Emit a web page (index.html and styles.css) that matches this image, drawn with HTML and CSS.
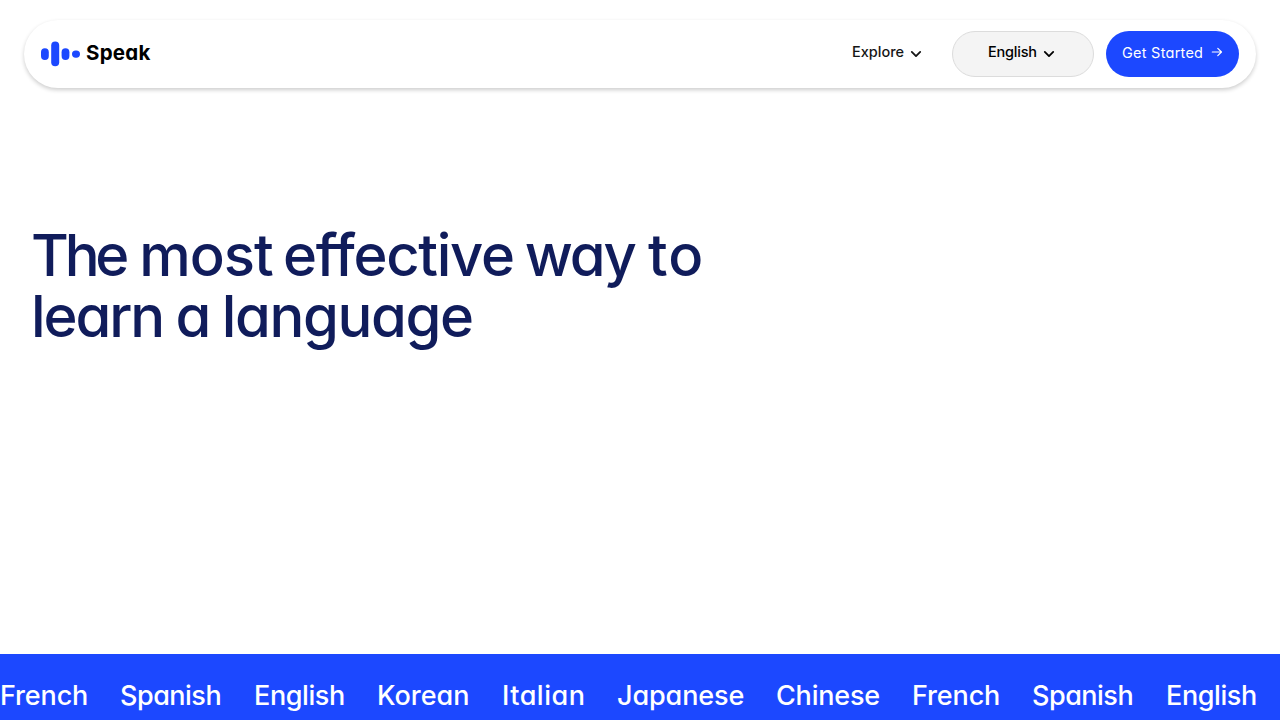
FILE: index.html
```html
<!DOCTYPE html>
<html lang="en">
<head>
<meta charset="utf-8">
<title>Speak</title>
<link rel="stylesheet" href="styles.css">
</head>
<body>
<header class="nav">
  <a class="brand">
    <svg class="brand-mark" width="40" height="26" viewBox="0 0 40 26" fill="#1c48ff">
      <rect x="1" y="7.3" width="7.8" height="11.6" rx="3.9"/>
      <rect x="11.2" y="0.4" width="8" height="24.8" rx="4"/>
      <rect x="21.6" y="7.3" width="7.8" height="11.6" rx="3.9"/>
      <rect x="32" y="9.4" width="8" height="7.4" rx="3.7"/>
    </svg>
    <span class="brand-name">Speak</span>
  </a>
  <nav class="actions">
    <a class="explore"><span class="explore-text">Explore</span>
      <svg class="chevron" width="12" height="8" viewBox="0 0 12 8" fill="none" stroke="currentColor" stroke-width="1.8" stroke-linecap="round" stroke-linejoin="round"><path d="M1.8 1.9 6 6.1l4.2-4.2"/></svg></a>
    <a class="language"><span class="language-text">English</span>
      <svg class="chevron" width="12" height="8" viewBox="0 0 12 8" fill="none" stroke="currentColor" stroke-width="1.8" stroke-linecap="round" stroke-linejoin="round"><path d="M1.8 1.9 6 6.1l4.2-4.2"/></svg></a>
    <a class="start"><span class="start-text">Get Started</span>
      <svg class="arrow" width="12" height="10" viewBox="0 0 12 10" fill="none" stroke="currentColor" stroke-width="1.2" stroke-linecap="round" stroke-linejoin="round"><path d="M1.3 5h9.2M6.8 1.3 10.5 5 6.8 8.7"/></svg></a>
  </nav>
</header>
<main class="hero">
  <h1 class="title">
    <span class="line"><span class="tight">The</span> <span class="wide">most</span> <span class="medium">effective</span> <span class="snug way">way</span> <span class="wide">to</span></span>
    <span class="line line-two"><span class="snug">learn</span> <span class="snug">a</span> <span class="language-word">language</span></span>
  </h1>
</main>
<section class="languages">
  <span class="item french">French</span>
  <span class="item spanish">Spanish</span>
  <span class="item english">English</span>
  <span class="item korean">Korean</span>
  <span class="item italian">Italian</span>
  <span class="item japanese">Japanese</span>
  <span class="item chinese">Chinese</span>
  <span class="item french">French</span>
  <span class="item spanish">Spanish</span>
  <span class="item english">English</span>
</section>
</body>
</html>
```
FILE: styles.css
```css
* { box-sizing: border-box; }
body {
  margin: 0;
  height: 720px;
  overflow: hidden;
  display: flex;
  flex-direction: column;
  background: #fff;
  font-family: Inter, "Liberation Sans", sans-serif;
  font-feature-settings: "cv11" 1;
}
.nav {
  display: flex;
  align-items: center;
  justify-content: space-between;
  height: 68px;
  margin: 20px 24px 0;
  padding: 0 17px 0 16px;
  border-radius: 34px;
  background: #fff;
  box-shadow: 0 2px 4px rgba(0, 0, 0, 0.2);
}
.brand { display: flex; align-items: center; gap: 6px; color: #000; }
.brand-name { font-size: 20.5px; line-height: 24px; font-weight: 700; margin-top: -3px; letter-spacing: 0.25px; }
.actions { display: flex; align-items: center; font-size: 14.5px; line-height: 20px; }
.explore { display: flex; align-items: center; width: 100px; color: #151515; }
.explore-text { width: 58px; margin-top: -4px; font-weight: 450; }
.chevron { flex: none; }
.language {
  display: flex;
  align-items: center;
  width: 142px;
  height: 46px;
  padding-left: 35px;
  border: 1px solid #dcdcdc;
  border-radius: 23px;
  background: #f4f4f4;
  color: #000;
  font-weight: 500;
}
.language-text { width: 55px; margin-top: -4px; letter-spacing: -0.2px; }
.start {
  display: flex;
  align-items: center;
  width: 133px;
  height: 46px;
  margin-left: 12px;
  padding-left: 16px;
  border-radius: 23px;
  background: #1c48ff;
  color: #fff;
}
.start-text { width: 89px; margin-top: -2px; letter-spacing: 0.25px; }
.arrow { flex: none; margin-top: -4px; }
.hero { flex: 1; padding: 137px 31px 0; }
.title { margin: 0; color: #101c5b; font-size: 58px; line-height: 61px; font-weight: 500; }
.line { display: block; white-space: nowrap; letter-spacing: -6px; }
.line-two { letter-spacing: -5px; }
.tight { letter-spacing: -4.2px; margin-right: 4.6px; }
.snug { letter-spacing: -2.1px; margin-right: 2px; }
.way { margin-right: 3.8px; }
.medium { letter-spacing: -1.3px; margin-right: 1.4px; }
.wide { letter-spacing: -1px; margin-right: 0.8px; }
.wide:last-child { letter-spacing: 1px; }
.language-word { letter-spacing: -1.4px; }
.languages {
  display: grid;
  grid-template-columns: 120px 134px 123px 125px 115px 159px 136px 120px 134px 123px;
  height: 66px;
  padding-top: 24px;
  background: #1c48ff;
  color: #fff;
  font-size: 27px;
  line-height: 36px;
  font-weight: 450;
  white-space: nowrap;
}
.french { letter-spacing: -0.15px; }
.spanish { letter-spacing: -0.5px; }
.english { letter-spacing: -0.4px; }
.italian { letter-spacing: 0.5px; }
.japanese { letter-spacing: -0.1px; }
.chinese { letter-spacing: -0.2px; }
```
